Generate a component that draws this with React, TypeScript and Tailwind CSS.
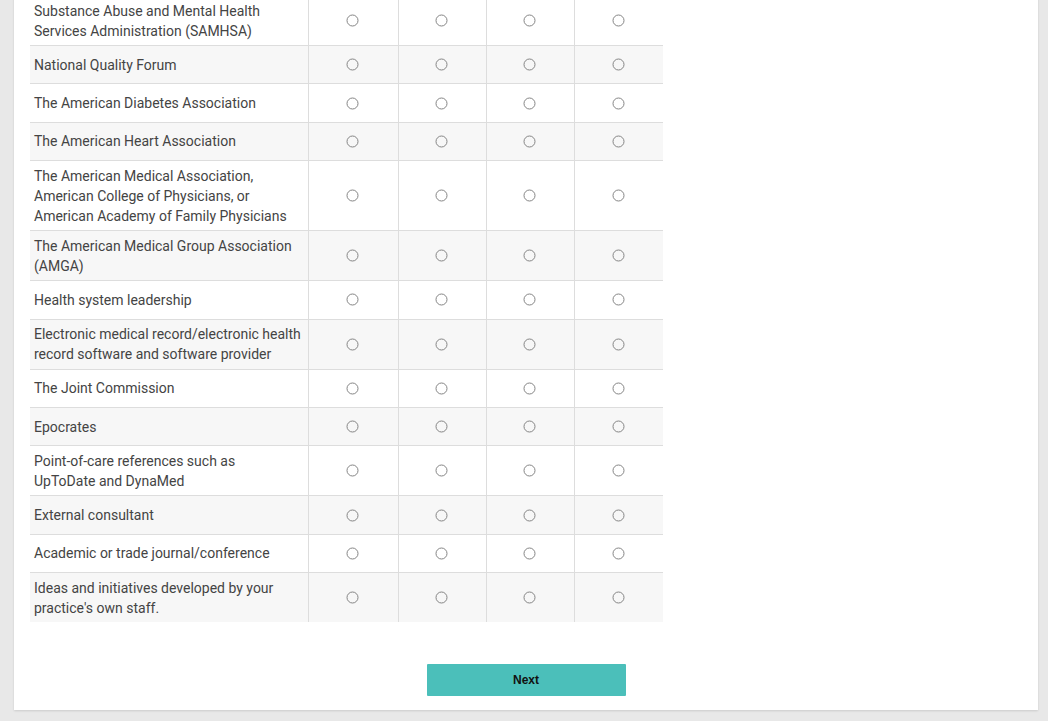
import React from 'react';

const rows: string[][] = [
  ['Substance Abuse and Mental Health', 'Services Administration (SAMHSA)'],
  ['National Quality Forum'],
  ['The American Diabetes Association'],
  ['The American Heart Association'],
  ['The American Medical Association,', 'American College of Physicians, or', 'American Academy of Family Physicians'],
  ['The American Medical Group Association', '(AMGA)'],
  ['Health system leadership'],
  ['Electronic medical record/electronic health', 'record software and software provider'],
  ['The Joint Commission'],
  ['Epocrates'],
  ['Point-of-care references such as', 'UpToDate and DynaMed'],
  ['External consultant'],
  ['Academic or trade journal/conference'],
  ['Ideas and initiatives developed by your', "practice's own staff."],
];

const Radio: React.FC = () => (
  <svg width="13" height="13" viewBox="0 0 13 13" className="block">
    <circle cx="6.5" cy="6.5" r="5.5" fill="none" stroke="#858585" strokeWidth="1" />
  </svg>
);

const colClasses = [
  'w-[90px] border-r border-[#dddddd] pr-[3px]',
  'w-[88px] border-r border-[#dddddd] pr-[3px]',
  'w-[88px] border-r border-[#dddddd] pr-[2px]',
  'w-[88px] pr-[2px]',
];

const Row: React.FC<{ lines: string[]; index: number; last: boolean }> = ({ lines, index, last }) => {
  return (
    <div
      className={`flex w-[633px] min-h-[38.4px] ${index % 2 ? 'bg-[#f7f7f7]' : 'bg-white'} ${
        last ? '' : 'border-b border-[#dddddd]'
      }`}
    >
      <div className="w-[279px] shrink-0 border-r border-[#dddddd] pl-1 pr-0.5 py-[4.5px] flex flex-col justify-center text-[14px] leading-5 text-[#444444]">
        {lines.map((l) => (
          <span key={l} className="whitespace-nowrap">
            {l}
          </span>
        ))}
      </div>
      {colClasses.map((c, i) => (
        <div key={i} className={`${c} shrink-0 flex items-center justify-center`}>
          <Radio />
        </div>
      ))}
    </div>
  );
};

export default function App() {
  return (
    <div className="h-screen overflow-hidden bg-[#e8e8e8] pl-[14px] pr-[10px] font-['Roboto',sans-serif]">
      <div className="bg-white shadow-[0_1px_2px_rgba(0,0,0,0.12)] pl-4 pb-[14px] -mt-[4px]">
        <div className="flex flex-col">
          {rows.map((lines, i) => (
            <Row key={i} lines={lines} index={i} last={i === rows.length - 1} />
          ))}
        </div>
        <div className="flex justify-center pt-[42px] -ml-4">
          <button className="w-[199px] h-[32px] bg-[#4bbfba] rounded-[1px] text-[12px] font-bold text-[#111] font-['Liberation_Sans',sans-serif]">
            Next
          </button>
        </div>
      </div>
    </div>
  );
}
